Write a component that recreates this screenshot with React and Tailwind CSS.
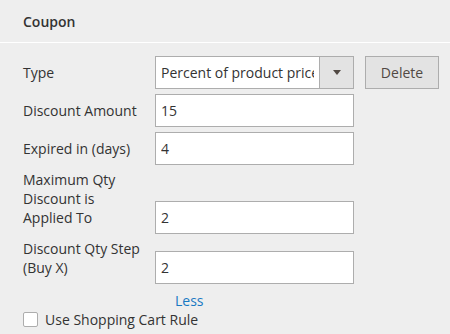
import { useState } from "react";

const Field = ({ label, value, onChange }) => (
    <div className="flex items-end">
        <label className="w-[132px] shrink-0 pr-3 pb-[7px] leading-[19px]">{label}</label>
        <input
            type="text"
            value={value}
            onChange={(e) => onChange(e.target.value)}
            className="w-[199px] h-[33px] bg-white border border-[#adadad] px-[5px] text-[#333] outline-none"
        />
    </div>
);

const App = () => {
    const [amount, setAmount] = useState("15");
    const [days, setDays] = useState("4");
    const [maxQty, setMaxQty] = useState("2");
    const [step, setStep] = useState("2");
    const [useRule, setUseRule] = useState(false);

    return (
        <div className="w-[450px] h-[334px] bg-[#eeeeee] text-[14px] text-[#333] font-['Open_Sans',sans-serif] overflow-hidden">
            <div className="w-[449px] h-[42px] flex items-center px-[23px] font-semibold border-b border-white box-content">
                Coupon
            </div>

            <div className="pl-[23px] pt-[13px] flex flex-col gap-[5px]">
                {/* Type */}
                <div className="flex items-end">
                    <label className="w-[132px] shrink-0 pb-[7px] leading-[19px]">Type</label>
                    <div className="w-[199px] h-[33px] shrink-0 flex bg-white border border-[#adadad]">
                        <span className="flex-1 pl-[5px]">
                            <span className="block w-[153px] leading-[31px] whitespace-nowrap overflow-hidden">
                                Percent of product price
                            </span>
                        </span>
                        <span className="w-[34px] shrink-0 bg-[#e3e3e3] border-l border-[#adadad] flex items-center justify-center">
                            <svg width="8" height="5" viewBox="0 0 8 5">
                                <path d="M0 0h8L4 5z" fill="#514943" />
                            </svg>
                        </span>
                    </div>
                    <button className="ml-[11px] w-[74px] h-[33px] shrink-0 bg-[#e3e3e3] border border-[#adadad] text-[#514943]">
                        Delete
                    </button>
                </div>

                <Field label="Discount Amount" value={amount} onChange={setAmount} />
                <Field label="Expired in (days)" value={days} onChange={setDays} />
                <Field label="Maximum Qty Discount is Applied To" value={maxQty} onChange={setMaxQty} />
                <Field label="Discount Qty Step (Buy X)" value={step} onChange={setStep} />

                <a href="#" className="ml-[152px] mt-[2px] leading-[19px] text-[#1979c3]">
                    Less
                </a>

                <label className="flex items-center gap-[7px] -mt-[5px] leading-[19px]">
                    <input
                        type="checkbox"
                        checked={useRule}
                        onChange={(e) => setUseRule(e.target.checked)}
                        className="appearance-none w-[15px] h-[15px] bg-white border border-[#adadad] rounded-[2px]"
                    />
                    Use Shopping Cart Rule
                </label>
            </div>
        </div>
    );
};

export default App;
